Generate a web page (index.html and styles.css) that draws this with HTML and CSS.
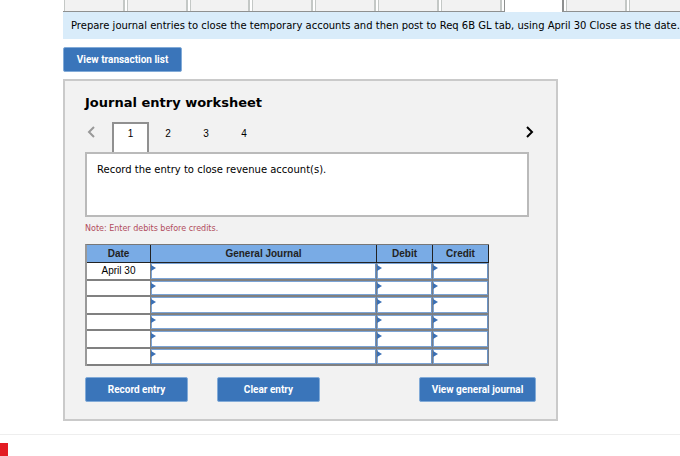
FILE: index.html
```html
<!DOCTYPE html>
<html lang="en">
<head>
<meta charset="utf-8">
<title>Journal entry worksheet</title>
<link rel="stylesheet" href="styles.css">
</head>
<body>
<main class="page">
  <div class="tabs" aria-hidden="true">
    <span class="tab"></span><span class="tab"></span><span class="tab"></span><span class="tab"></span><span class="tab"></span><span class="tab"></span><span class="tab"></span><span class="tab tab-active"></span><span class="tab"></span><span class="tab"></span>
  </div>
  <p class="banner">Prepare journal entries to close the temporary accounts and then post to Req 6B GL tab, using April 30 Close as the date.</p>
  <button class="btn btn-list" type="button">View transaction list</button>

  <section class="panel">
    <h1 class="title">Journal entry worksheet</h1>
    <nav class="pager">
      <button class="arrow arrow-prev" type="button" aria-label="Previous"><svg width="8" height="12" viewBox="0 0 8 12"><path d="M7 1 L2 6 L7 11"/></svg></button>
      <button class="step step-active" type="button">1</button>
      <button class="step" type="button">2</button>
      <button class="step" type="button">3</button>
      <button class="step" type="button">4</button>
      <button class="arrow arrow-next" type="button" aria-label="Next"><svg width="8" height="12" viewBox="0 0 8 12"><path d="M1 1 L6 6 L1 11"/></svg></button>
    </nav>
    <div class="prompt">Record the entry to close revenue account(s).</div>
    <p class="note">Note: Enter debits before credits.</p>

    <table class="journal">
      <colgroup><col class="col-date"><col class="col-journal"><col class="col-amount"><col class="col-amount"></colgroup>
      <thead>
        <tr><th scope="col">Date</th><th scope="col">General Journal</th><th scope="col">Debit</th><th scope="col">Credit</th></tr>
      </thead>
      <tbody>
        <tr><td>April 30</td><td class="entry"><input aria-label="General Journal, row 1"></td><td class="entry"><input aria-label="Debit, row 1"></td><td class="entry"><input aria-label="Credit, row 1"></td></tr>
        <tr><td></td><td class="entry"><input aria-label="General Journal, row 2"></td><td class="entry"><input aria-label="Debit, row 2"></td><td class="entry"><input aria-label="Credit, row 2"></td></tr>
        <tr><td></td><td class="entry"><input aria-label="General Journal, row 3"></td><td class="entry"><input aria-label="Debit, row 3"></td><td class="entry"><input aria-label="Credit, row 3"></td></tr>
        <tr><td></td><td class="entry"><input aria-label="General Journal, row 4"></td><td class="entry"><input aria-label="Debit, row 4"></td><td class="entry"><input aria-label="Credit, row 4"></td></tr>
        <tr><td></td><td class="entry"><input aria-label="General Journal, row 5"></td><td class="entry"><input aria-label="Debit, row 5"></td><td class="entry"><input aria-label="Credit, row 5"></td></tr>
        <tr><td></td><td class="entry"><input aria-label="General Journal, row 6"></td><td class="entry"><input aria-label="Debit, row 6"></td><td class="entry"><input aria-label="Credit, row 6"></td></tr>
      </tbody>
    </table>

    <div class="actions">
      <button class="btn btn-entry" type="button">Record entry</button>
      <button class="btn btn-entry" type="button">Clear entry</button>
      <button class="btn btn-journal" type="button">View general journal</button>
    </div>
  </section>
</main>
<footer class="footer"><div class="logo-block"></div></footer>
</body>
</html>
```
FILE: styles.css
```css
* { box-sizing: border-box; }

body {
  margin: 0;
  background: #fff;
  color: #000;
  font-family: Verdana, "DejaVu Sans", sans-serif;
  font-size: 10px;
  overflow: hidden;
}

button {
  font: inherit;
  color: inherit;
  margin: 0;
  padding: 0;
  border: 0;
  background: none;
}

.page { padding-left: 63px; }

.tabs {
  display: grid;
  grid-template-columns: repeat(10, 1fr);
  gap: 2px;
  height: 12px;
  margin-right: -10px;
  padding-left: 1px;
  border-bottom: 1px solid #8e9090;
}

.tab {
  background: #f2f2f2;
  border: solid #c4c8c6;
  border-width: 0 2px 0 1px;
}

.tab-active {
  background: #fff;
  border-color: #8e9090;
  margin-bottom: -1px;
}

.banner {
  margin: 0;
  padding: 8px 8px 7px;
  background: #d9ecfa;
  line-height: 12px;
  white-space: nowrap;
}

.btn {
  height: 25px;
  border: 1px solid #82abd8;
  border-radius: 2px;
  background: #3a75ba;
  color: #fff;
  font: bold 10px/12px Roboto, sans-serif;
}

.btn-list {
  display: block;
  width: 119px;
  margin-top: 8px;
}

.panel {
  max-width: 495px;
  margin-top: 7px;
  padding: 14px 20px 17px;
  background: #f2f2f2;
  border: 2px solid #cacaca;
}

.title {
  margin: 0;
  font-size: 13px;
  line-height: 16px;
}

.pager {
  display: flex;
  height: 30px;
  margin: 11px 0 0;
}

.arrow {
  width: 12px;
  height: 20px;
  color: #000;
}

.arrow svg {
  display: block;
  margin: 0 auto;
  fill: none;
  stroke: currentColor;
  stroke-width: 2;
}

.arrow-prev { color: #999; margin-right: 15px; }
.arrow-next { margin-left: auto; }

.step {
  width: 38px;
  padding-bottom: 7px;
  font: 10px/12px "Liberation Sans", sans-serif;
}

.step-active {
  width: 37px;
  background: #fff;
  border: 2px solid #909090;
  border-bottom: 0;
  padding-bottom: 9px;
}

.prompt {
  min-height: 65px;
  margin-right: 7px;
  padding: 9px 10px;
  background: #fff;
  border: 2px solid #bababa;
  line-height: 14px;
}

.note {
  margin: 6px 0 9px;
  color: #b14c5c;
  font-size: 8px;
  line-height: 12px;
}

.journal {
  width: 403px;
  table-layout: fixed;
  border-collapse: separate;
  border-spacing: 0;
  border-top: 1px solid #777;
  border-left: 2px solid #999;
  font: 10px/12px "Liberation Sans", sans-serif;
}

.col-date { width: 64px; }
.col-journal { width: 226px; }
.col-amount { width: 56px; }

.journal th {
  height: 18px;
  padding: 0;
  background: #79abe5;
  border: solid #222;
  border-width: 0 1px 1px 0;
  color: #222;
}

.journal td {
  height: 18px;
  padding: 0;
  background: #fff;
  border: solid #808080;
  border-width: 0 1px 2px 0;
  text-align: center;
}

.journal tr:nth-child(even) td { height: 16px; }
.journal tbody tr:last-child td { height: 17px; }

.journal .entry {
  position: relative;
  border-right-color: #777f8c;
}

.entry input {
  display: block;
  width: 100%;
  height: 100%;
  min-width: 0;
  padding: 0 6px;
  background: #fff;
  border: 1px solid #7ba4d6;
  border-right-color: #6a93c6;
  outline: 0;
  font: inherit;
  line-height: 12px;
}

.journal .entry input { height: 16px; }
.journal tr:nth-child(even) .entry input { height: 14px; }
.journal tbody tr:last-child .entry input { height: 15px; }

.entry::before {
  content: "";
  position: absolute;
  top: 2px;
  left: 0;
  border: solid transparent;
  border-width: 3px 0 3px 5px;
  border-left-color: #3a70b5;
}

.actions {
  display: flex;
  gap: 29px;
  margin-top: 11px;
}

.btn-entry { width: 103px; }
.btn-journal { width: 117px; margin-left: auto; }

.footer {
  margin-top: 13px;
  padding-top: 8px;
  border-top: 1px solid #eee;
}

.logo-block {
  width: 8px;
  height: 13px;
  background: #e31b23;
}
```
